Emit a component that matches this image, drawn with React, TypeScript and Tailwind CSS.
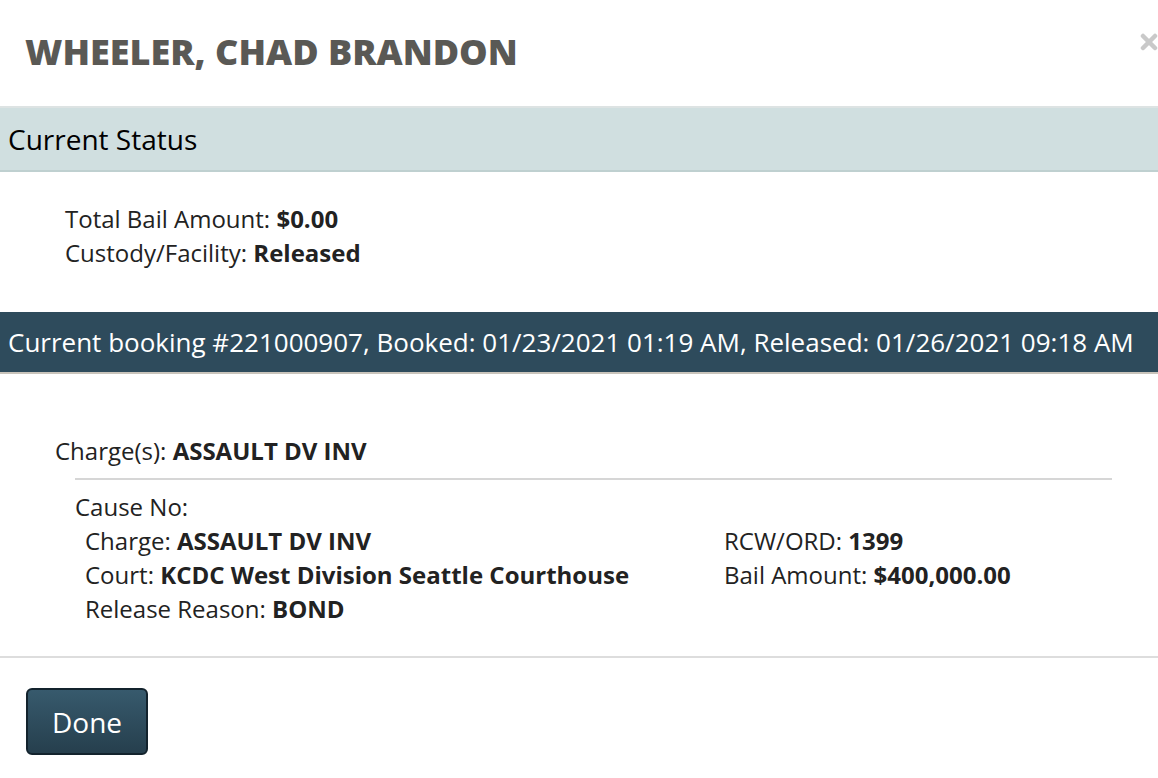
import { X } from "lucide-react";

const font = { fontFamily: '"Open Sans", "Liberation Sans", sans-serif' };

function Field({ label, value }: { label: string; value?: string }) {
  return (
    <div className="h-[34px] leading-[34px]">
      {label}
      {value && <b className="font-bold"> {value}</b>}
    </div>
  );
}

export default function App() {
  return (
    <div className="w-[1158px] h-[778px] bg-white text-[#222] overflow-hidden" style={font}>
      {/* Header */}
      <div className="relative h-[106px] flex items-center pl-[25px]">
        <h1 className="text-[36px] font-extrabold text-[#5a5955] uppercase pb-[2px]">
          Wheeler, Chad Brandon
        </h1>
        <span className="absolute -right-[3px] top-[30px] text-[#c9c9c9]">
          <X size={24} strokeWidth={4.5} />
        </span>
      </div>

      {/* Current status */}
      <div className="border-t-2 border-t-[#dde3e3] border-b-2 border-b-[#bfd0d0] bg-[#d0dfe0] h-[66px] flex items-center pl-2 text-[28px] text-black">
        Current Status
      </div>
      <div className="h-[140px] pl-[65px] pt-[30px] text-[24px]">
        <Field label="Total Bail Amount:" value="$0.00" />
        <Field label="Custody/Facility:" value="Released" />
      </div>

      {/* Booking */}
      <div className="bg-[#2e4b5c] border-b-2 border-b-[#c9c4bb] h-[62px] flex items-center pl-2 text-[26px] text-white">
        Current booking #221000907, Booked: 01/23/2021 01:19 AM, Released: 01/26/2021 09:18 AM
      </div>

      <div className="pt-[60px] text-[24px] border-b-2 border-b-[#dddddd] h-[284px]">
        <div className="pl-[55px]">
          <Field label="Charge(s):" value="ASSAULT DV INV" />
        </div>
        <div className="ml-[75px] mr-[46px] border-t-2 border-[#d6d6d6] mt-[10px]" />
        <div className="pl-[75px] pt-[10px]">
          <Field label="Cause No:" />
          <div className="flex pl-[10px]">
            <div className="w-[639px]">
              <Field label="Charge:" value="ASSAULT DV INV" />
              <Field label="Court:" value="KCDC West Division Seattle Courthouse" />
              <Field label="Release Reason:" value="BOND" />
            </div>
            <div>
              <Field label="RCW/ORD:" value="1399" />
              <Field label="Bail Amount:" value="$400,000.00" />
            </div>
          </div>
        </div>
      </div>

      {/* Footer */}
      <div className="pl-[26px] pt-[30px]">
        <button className="w-[122px] h-[67px] rounded-[6px] border-2 border-[#13232d] bg-gradient-to-b from-[#375a6d] to-[#263f4d] text-white text-[28px]">
          Done
        </button>
      </div>
    </div>
  );
}
